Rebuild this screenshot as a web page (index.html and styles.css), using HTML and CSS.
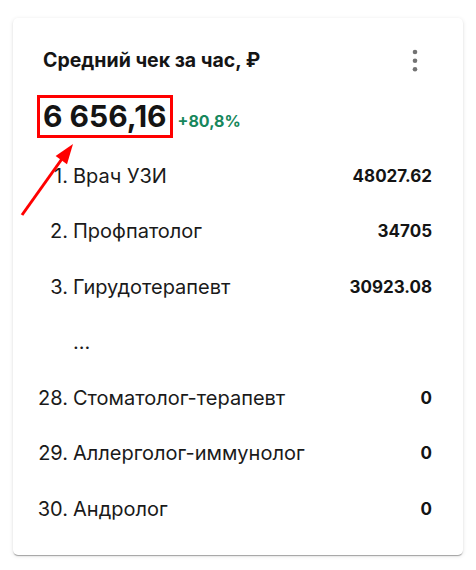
FILE: index.html
```html
<!DOCTYPE html>
<html lang="ru">
<head>
<meta charset="utf-8">
<title>Средний чек за час</title>
<link rel="stylesheet" href="styles.css">
</head>
<body>
<div class="card">
  <div class="header">
    <div class="title">Средний чек за час, ₽</div>
    <svg class="kebab" width="10" height="27" viewBox="0 0 10 27" aria-hidden="true">
      <circle cx="5" cy="5" r="2.3" fill="#737373"/>
      <circle cx="5" cy="13.7" r="2.3" fill="#737373"/>
      <circle cx="5" cy="22.3" r="2.3" fill="#737373"/>
    </svg>
  </div>
  <div class="kpi">
    <span class="value">6 656,16</span>
    <span class="delta">+80,8%</span>
  </div>
  <ul class="list">
    <li class="row"><span class="num">1.</span><span class="label">Врач УЗИ</span><span class="amount">48027.62</span></li>
    <li class="row"><span class="num">2.</span><span class="label">Профпатолог</span><span class="amount">34705</span></li>
    <li class="row"><span class="num">3.</span><span class="label">Гирудотерапевт</span><span class="amount">30923.08</span></li>
    <li class="row"><span class="num"></span><span class="label">...</span><span class="amount"></span></li>
    <li class="row"><span class="num">28.</span><span class="label">Стоматолог-терапевт</span><span class="amount">0</span></li>
    <li class="row"><span class="num">29.</span><span class="label">Аллерголог-иммунолог</span><span class="amount">0</span></li>
    <li class="row"><span class="num">30.</span><span class="label">Андролог</span><span class="amount">0</span></li>
  </ul>
</div>
<svg class="arrow" width="476" height="570" viewBox="0 0 476 570" aria-hidden="true">
  <line x1="22" y1="215" x2="64" y2="156" stroke="#ff0000" stroke-width="3"/>
  <polygon points="73,144 55.6,156.1 67,164.3" fill="#ff0000"/>
</svg>
</body>
</html>
```
FILE: styles.css
```css
html, body {
  margin: 0;
  padding: 0;
  background: #ffffff;
}
body {
  padding: 18px 13px 15px 13px;
  font-family: Inter, "Noto Sans", sans-serif;
  color: #1a1a1a;
  position: relative;
  width: 450px;
}
.card {
  box-sizing: border-box;
  width: 450px;
  height: 537px;
  background: #ffffff;
  border-radius: 5px;
  box-shadow: 0px 2px 1px -1px rgba(0,0,0,0.2), 0px 1px 1px 0px rgba(0,0,0,0.14), 0px 1px 4px 0px rgba(0,0,0,0.12);
  padding: 30px 31px 17px 30px;
}
.header {
  display: flex;
  align-items: center;
  justify-content: space-between;
  height: 24px;
}
.title {
  font-size: 19.5px;
  font-weight: 700;
  line-height: 24px;
  color: #151515;
}
.kebab {
  display: block;
  margin-right: 12px;
}
.kpi {
  display: flex;
  align-items: baseline;
  margin-top: 29px;
}
.value {
  font-size: 30px;
  font-weight: 700;
  line-height: 31px;
  color: #141414;
  outline: 3px solid #ff0000;
  outline-offset: 3px;
}
.delta {
  margin-left: 11px;
  font-size: 16px;
  font-weight: 700;
  color: #17875c;
}
.list {
  list-style: none;
  margin: 16px 0 0 -6px;
  padding: 0;
}
.row {
  display: flex;
  align-items: center;
  height: 55.5px;
  font-size: 20px;
}
.num {
  width: 31px;
  text-align: right;
  color: #1a1a1a;
}
.label {
  flex: 1;
  margin-left: 5px;
  color: #1a1a1a;
}
.amount {
  font-size: 17px;
  font-weight: 700;
  color: #141414;
}
.arrow {
  position: absolute;
  left: 0;
  top: 0;
  pointer-events: none;
}
```
